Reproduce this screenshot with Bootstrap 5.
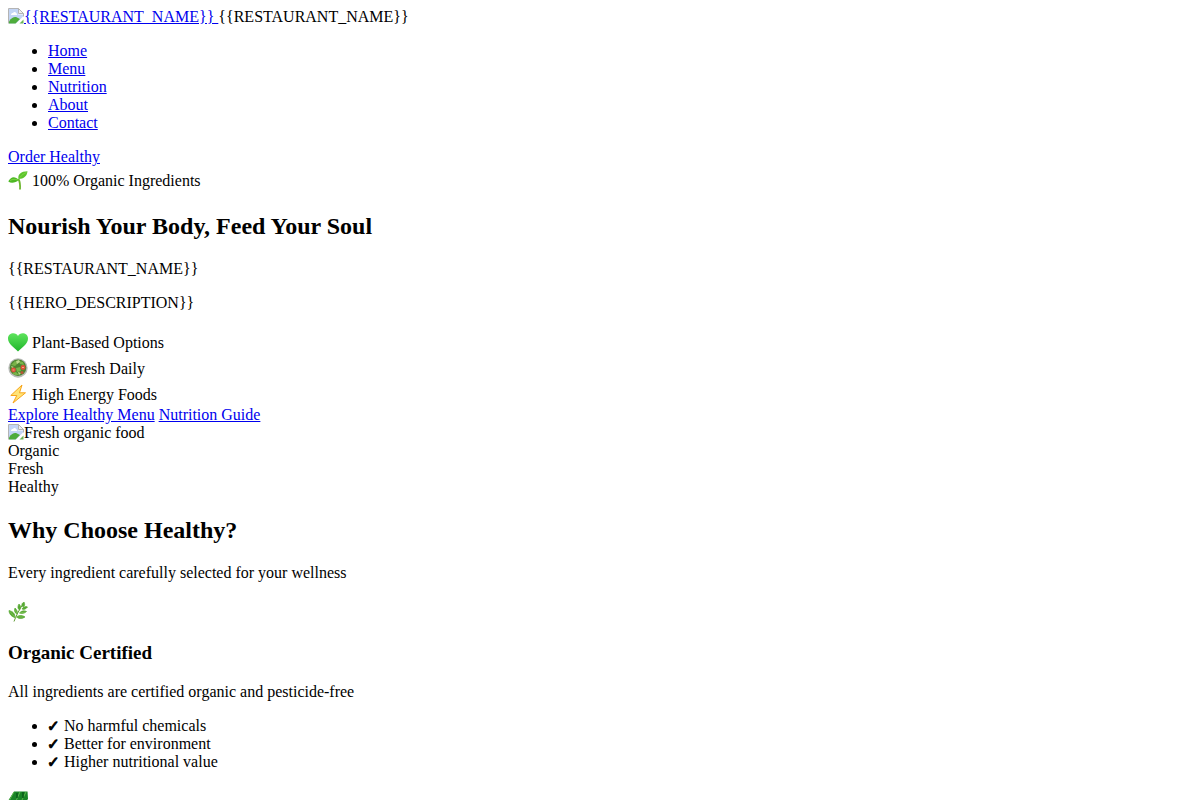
<!DOCTYPE html>
<html lang="en">
<head>
<meta charset="utf-8">
<meta name="viewport" content="width=device-width, initial-scale=1">
<title>{{RESTAURANT_NAME}}</title>
<link href="https://cdn.jsdelivr.net/npm/bootstrap@5.3.0/dist/css/bootstrap.min.css" rel="stylesheet">
<style>
  body { font-family: "Liberation Serif", "Times New Roman", serif; font-size: 16px; line-height: 18px; color: #000; }
  a, a:hover { color: #0000ee; }
  h2 { font-size: 24px; line-height: 28px; font-weight: 700; margin: 20px 0; }
  h3 { font-size: 19px; line-height: 20px; font-weight: 700; margin: 19px 0 20px; }
  ul { padding-left: 40px; }
  .emoji-line { display: flex; gap: 4px; height: 26px; }
  .emoji-line svg { width: 20px; height: 20px; margin-top: 4px; }
  .emoji-line span { padding-top: 6px; }
  .missing { width: 16px; height: 16px; vertical-align: top; }
  .tick { display: inline-block; width: 12px; height: 18px; vertical-align: top; font-family: "DejaVu Sans", sans-serif; font-size: 15px; text-indent: -1px; -webkit-text-stroke: 1px #000; }
</style>
</head>
<body class="p-2">
<svg width="0" height="0" class="position-absolute" aria-hidden="true">
  <symbol id="missing" viewBox="0 0 16 16">
    <path d="M.5 15.500V.5h10l5 5v3" fill="#fff" stroke="#b4b4b4"/>
    <path d="M1 1h9v5.500h5v2l-7 7H1z" fill="#c3d5f5"/>
    <path d="M3 7c0-1.500 1-2 2-2 .5-1.500 3-1.300 3 .3 1.400 0 1.600 1.700.5 1.700z" fill="#fff"/>
    <path d="M1 15.500v-2C4 9 7 8.500 9 9.500l3 1.500-4.500 4.500z" fill="#4eac3c"/>
    <path d="M10.500.5v5h5z" fill="#eee" stroke="#b4b4b4"/>
    <path d="M11.500 15.500l4-4v4z" fill="#6cb456"/>
  </symbol>
</svg>
<header>
  <div><a href="#"><svg class="missing" aria-hidden="true"><use href="#missing"/></svg>{{RESTAURANT_NAME}} </a><span>{{RESTAURANT_NAME}}</span></div>
  <nav>
    <ul class="my-3">
      <li><a href="#">Home</a></li>
      <li><a href="#">Menu</a></li>
      <li><a href="#">Nutrition</a></li>
      <li><a href="#">About</a></li>
      <li><a href="#">Contact</a></li>
    </ul>
  </nav>
  <div><a href="#">Order Healthy</a></div>
</header>
<main>
  <section>
    <div class="emoji-line">
      <svg viewBox="0 0 20 20" aria-hidden="true"><path d="M12 19.500c.3-4 .3-7-1.500-10.500" fill="none" stroke="#6cb52d" stroke-width="1.800"/><path d="M10.800 10C7.500 13 3 13.500.3 11.500 2.500 6.500 7 5.500 10.800 10z" fill="#4db824"/><path d="M10.500 9C9.500 4.500 13 1.300 19.500 1.300 19 6 16 9 10.500 9z" fill="#5cc42c"/><path d="M2 10.500c3-1.500 5-1.500 8-.5M12 7.500c2-3 4-4 6.500-5" fill="none" stroke="#85d84b" stroke-width=".8"/></svg>
      <span>100% Organic Ingredients</span>
    </div>
    <h2>Nourish Your Body, Feed Your Soul</h2>
    <p class="mb-3">{{RESTAURANT_NAME}}</p>
    <p class="mb-3">{{HERO_DESCRIPTION}}</p>
    <div class="emoji-line">
      <svg viewBox="0 0 20 20" aria-hidden="true"><defs><linearGradient id="heart" x2="0" y2="1"><stop stop-color="#5ee45c"/><stop offset="1" stop-color="#20b52b"/></linearGradient></defs><path d="M10 19.500C6 15.500 0 12 0 6.500 0 .5 8-.5 10 4 12-.5 20 .5 20 6.500 20 12 14 15.500 10 19.500z" fill="url(#heart)"/></svg>
      <span>Plant-Based Options</span>
    </div>
    <div class="emoji-line">
      <svg viewBox="0 0 20 20" aria-hidden="true"><circle cx="10" cy="10" r="9.700" fill="#b9bbb8"/><circle cx="10" cy="9.700" r="8.300" fill="#4d8530"/><path d="M3 7l4-4 3 2-3 3zM11 3l4 1 1 3-4-1zM8 10l4-1 1 4-4 1zM4 15l4-1 3 3H7z" fill="#79b348"/><path d="M8 3l3-1 1 2-3 2zM3 8l3 1-2 1zM10 14l3 1-2 2z" fill="#bfdb8c"/><circle cx="5.500" cy="12" r="2.400" fill="#dd5038"/><circle cx="15" cy="9.500" r="2.400" fill="#dd5038"/><circle cx="14" cy="14.500" r="1.500" fill="#bc5436"/><path d="M4.500 12h2M14 9.500h2" stroke="#f5a386"/></svg>
      <span>Farm Fresh Daily</span>
    </div>
    <div class="emoji-line">
      <svg viewBox="0 0 20 20" aria-hidden="true"><path d="M14 1 2.800 11.500h6L5 19 17.500 8.800h-6z" fill="#ffe477" stroke="#f8a51a" stroke-width="1"/></svg>
      <span>High Energy Foods</span>
    </div>
    <div><a href="#">Explore Healthy Menu</a> <a href="#">Nutrition Guide</a></div>
    <div><svg class="missing" aria-hidden="true"><use href="#missing"/></svg>Fresh organic food</div>
    <div>Organic</div>
    <div>Fresh</div>
    <div>Healthy</div>
  </section>
  <section>
    <h2>Why Choose Healthy?</h2>
    <p class="mb-3">Every ingredient carefully selected for your wellness</p>
    <div class="emoji-line">
      <svg viewBox="0 0 20 20" aria-hidden="true"><path d="M6 19.500C8 14 11 8 15 2" fill="none" stroke="#609b35" stroke-width="1"/><g fill="#58a934" stroke="#58a934" stroke-width=".7"><path d="M15 5c-2-2-1-4 1-5 1 2 1 4-1 5zM11.500 8c-2-1-2-4-.5-6 2 2 2 4 .5 6zM9 12C6.500 11 6 8 7 6c2 2 3 4 2 6zM7 15.500C4 15 1 12 1 8.500c4 1 6 3 6 7zM14 7c1-2 3-3 5.500-2C18 7 16 8 14 7zM11.500 11c2-2 4-3 7-1.500-2 2-5 2.500-7 1.500zM8.500 15c2-2 6-2 8.500 0-3 2-6 2-8.500 0z"/></g><path d="M2 9.500l5 6M7.500 8l1.500 4M9 15h6M12 11l5-1" stroke="#89cb60" stroke-width=".6"/></svg>
    </div>
    <h3>Organic Certified</h3>
    <p class="mb-3">All ingredients are certified organic and pesticide-free</p>
    <ul class="mb-3">
      <li><span class="tick">✓</span> No harmful chemicals</li>
      <li><span class="tick">✓</span> Better for environment</li>
      <li><span class="tick">✓</span> Higher nutritional value</li>
    </ul>
    <div class="emoji-line">
      <svg viewBox="0 0 20 20" aria-hidden="true"><path d="M6 .5h13.500l.5 7-5 12H1L0 10z" fill="#188526"/><path d="M6 1 1 10M12 1 8 10M18 1l-5 10" stroke="#5cb64c" stroke-width="1"/><path d="M9 2v5M15 1v6" stroke="#075b18" stroke-width="1.500"/></svg>
    </div>
  </section>
</main>
<script src="https://cdn.jsdelivr.net/npm/bootstrap@5.3.0/dist/js/bootstrap.bundle.min.js"></script>
</body>
</html>
